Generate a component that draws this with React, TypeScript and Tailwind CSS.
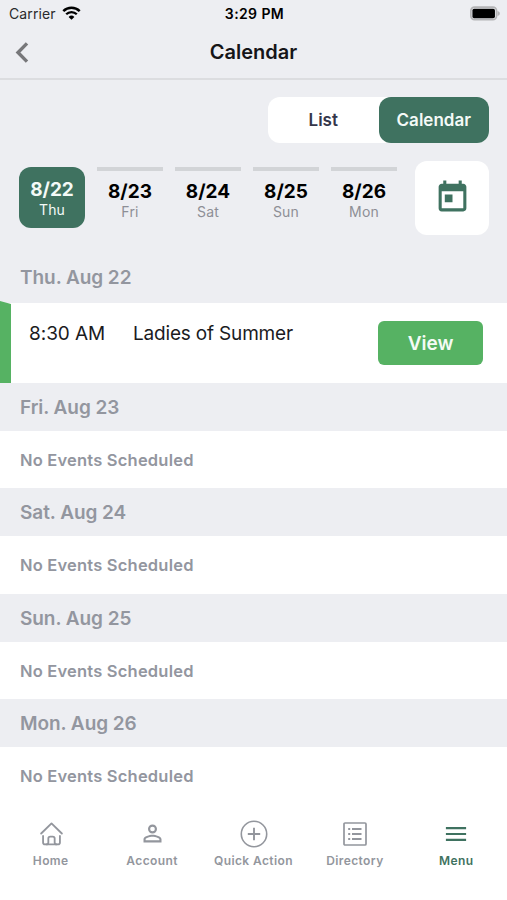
import { useState } from "react";
import { MdPersonOutline, MdToday } from "react-icons/md";

const days = [
  { date: "8/22", day: "Thu" },
  { date: "8/23", day: "Fri" },
  { date: "8/24", day: "Sat" },
  { date: "8/25", day: "Sun" },
  { date: "8/26", day: "Mon" },
];

const emptyDays = ["Fri. Aug 23", "Sat. Aug 24", "Sun. Aug 25", "Mon. Aug 26"];

function StatusBar() {
  return (
    <div className="grid h-[26px] grid-cols-3 items-center pl-[9px] pr-[7px] text-black">
      <div className="flex items-center gap-[6px]">
        <span className="text-[14px] tracking-[0.12px] text-[#2a2a2c]">Carrier</span>
        <svg width="19" height="14" viewBox="0 0 19 14" fill="none">
          <path d="M1.3 5.2a11.7 11.7 0 0 1 16.4 0" stroke="currentColor" strokeWidth="2.5" />
          <path d="M4.2 8.3a7.5 7.5 0 0 1 10.6 0" stroke="currentColor" strokeWidth="2.3" />
          <path d="M9.5 13.8 6.6 10.9a4.2 4.2 0 0 1 5.8 0z" fill="currentColor" />
        </svg>
      </div>
      <span className="text-center text-[14px] font-semibold tracking-[0.4px]">3:29 PM</span>
      <svg className="justify-self-end" width="30" height="15" viewBox="0 0 31 15">
        <rect x="0.9" y="0.9" width="26.5" height="13" rx="3.8" fill="none" stroke="#b4b4b6" strokeWidth="1.8" />
        <path d="M28.4 4.8c1.8.6 2.4 1.6 2.4 2.6s-.6 2-2.4 2.6z" fill="#b4b4b6" />
        <rect x="2.5" y="2.5" width="23.3" height="9.8" rx="1.8" fill="#000" />
      </svg>
    </div>
  );
}

function HomeIcon() {
  return (
    <svg className="ml-px" width="23" height="25" viewBox="0 0 24 26" fill="none" stroke="currentColor" strokeWidth="1.9" strokeLinecap="round" strokeLinejoin="round">
      <path d="M1.2 13 12 2.4 22.8 13" />
      <path d="M3.2 15.6v6.7q0 2 2 2h13.6q2 0 2-2v-6.7" />
      <path d="M6.5 24.3q2.2 0 2.2-2v-4.1q0-2 2-2h2.6q2 0 2 2v4.1q0 2 2.2 2" />
    </svg>
  );
}

function PlusIcon() {
  return (
    <svg className="ml-px" width="28" height="28" viewBox="0 0 28 28" fill="none" stroke="currentColor" strokeWidth="1.6">
      <circle cx="14" cy="14" r="12.7" />
      <path d="M14 7.8v12.4M7.8 14h12.4" strokeWidth="1.9" />
    </svg>
  );
}

function DirectoryIcon() {
  return (
    <svg className="ml-px" width="24" height="24" viewBox="0 0 24 24" fill="none" stroke="currentColor" strokeWidth="1.7">
      <rect x="1" y="1" width="22" height="22" rx="1" />
      <path d="M9 7h9.5M9 12h9.5M9 17h9.5M5.2 7h2M5.2 12h2M5.2 17h2" strokeWidth="1.8" />
    </svg>
  );
}

function MenuIcon() {
  return (
    <svg width="22" height="16" viewBox="0 0 22 16" stroke="currentColor" strokeWidth="2.2">
      <path d="M.9 2.2h20.2M.9 8h20.2M.9 13.8h20.2" />
    </svg>
  );
}

const tabs = [
  { label: "Home", icon: <HomeIcon /> },
  { label: "Account", icon: <MdPersonOutline size={27} /> },
  { label: "Quick Action", icon: <PlusIcon /> },
  { label: "Directory", icon: <DirectoryIcon /> },
  { label: "Menu", icon: <MenuIcon /> },
];

export default function App() {
  const [view, setView] = useState("Calendar");
  const [selected, setSelected] = useState("8/22");

  return (
    <div className="flex h-[900px] w-[507px] flex-col overflow-hidden bg-white font-['Inter',sans-serif]">
      {/* Header */}
      <div className="h-20 shrink-0 border-b-2 border-[#dcdde0] bg-[#edeef2]">
        <StatusBar />
        <div className="grid h-[52px] grid-cols-3 items-center pl-[15px]">
          <button aria-label="Back">
            <svg width="14" height="21" viewBox="0 0 14 21" fill="none" stroke="#77777a" strokeWidth="3.4">
              <path d="M12 1.4 3 10.5l9 9.1" />
            </svg>
          </button>
          <h1 className="-ml-[15px] whitespace-nowrap text-center text-[20px] font-semibold text-[#151518]">Calendar</h1>
        </div>
      </div>

      {/* Filters */}
      <div className="h-[171px] shrink-0 bg-[#edeef2] pl-[19px] pr-[18px] pt-[17px]">
        <div className="ml-auto flex h-[46px] w-[221px] rounded-[12px] bg-white">
          {["List", "Calendar"].map((name) => (
            <button
              key={name}
              onClick={() => setView(name)}
              className={`flex-1 rounded-[12px] pt-0.5 text-[17px] font-semibold ${
                view === name ? "bg-[#3f7260] text-[#f4faf7]" : "text-[#34364a]"
              }`}
            >
              {name}
            </button>
          ))}
        </div>

        <div className="mt-[18px] flex items-start">
          <div className="flex gap-3 pt-[6px]">
            {days.map(({ date, day }) => (
              <button
                key={date}
                onClick={() => setSelected(date)}
                className={`flex h-[61px] w-[66px] flex-col items-center ${
                  selected === date
                    ? "rounded-[12px] bg-[#3f7260] pt-[10px] text-[#f4faf7]"
                    : "border-t-4 border-[#d2d4d7] pt-2 text-black"
                }`}
              >
                <span className="pt-px text-[19px] font-bold leading-[23px]">{date}</span>
                <span className={`text-[14px] leading-[18px] tracking-[0.2px] ${selected === date ? "" : "text-[#8d8f96]"}`}>
                  {day}
                </span>
              </button>
            ))}
          </div>
          <button aria-label="Pick a date" className="ml-auto flex h-[74px] w-[74px] items-center justify-center rounded-[12px] bg-white pb-0.5 text-[#3f7260]">
            <MdToday size={37} />
          </button>
        </div>
      </div>

      {/* Events */}
      <section className="shrink-0">
        <h2 className="flex h-[52px] items-center bg-[#edeef2] pl-5 pt-0.5 text-[19px] font-semibold tracking-[-0.06px] text-[#93969f]">Thu. Aug 22</h2>
        <div className="flex h-20 bg-white">
          <svg className="-mt-0.5 h-[82px] w-[11px] shrink-0" viewBox="0 0 11 82">
            <path d="M0 0 11 3v79H0z" fill="#56b263" />
          </svg>
          <span className="ml-[18px] mt-[18px] w-[104px] text-[19px] leading-[26px] tracking-[-0.05px] text-[#1b1b1e]">8:30 AM</span>
          <span className="mt-[18px] text-[19px] leading-[26px] tracking-[-0.18px] text-[#1b1b1e]">Ladies of Summer</span>
          <button className="ml-auto mr-6 mt-[18px] h-11 w-[105px] rounded-[6px] bg-[#56b263] pt-0.5 text-[19px] font-semibold text-[#f4fbf5]">
            View
          </button>
        </div>
      </section>
      {emptyDays.map((label) => (
        <section key={label} className="shrink-0">
          <h2 className="flex h-12 items-center bg-[#edeef2] pl-5 pt-0.5 text-[19px] font-semibold tracking-[-0.06px] text-[#93969f]">{label}</h2>
          <p className="flex h-[57.4px] items-center pl-5 pt-px text-[16.5px] font-semibold tracking-[0.2px] text-[#93969f]">No Events Scheduled</p>
        </section>
      ))}

      {/* Bottom tabs */}
      <nav className="mt-[14px] grid grid-cols-5">
        {tabs.map(({ label, icon }) => (
          <button
            key={label}
            className={`flex flex-col items-center ${label === "Menu" ? "text-[#3f7260]" : "text-[#93969d]"}`}
          >
            <span className="flex h-[30px] items-center">{icon}</span>
            <span className="mt-1 whitespace-nowrap text-[12px] font-semibold leading-4 tracking-[0.4px]">{label}</span>
          </button>
        ))}
      </nav>
    </div>
  );
}
